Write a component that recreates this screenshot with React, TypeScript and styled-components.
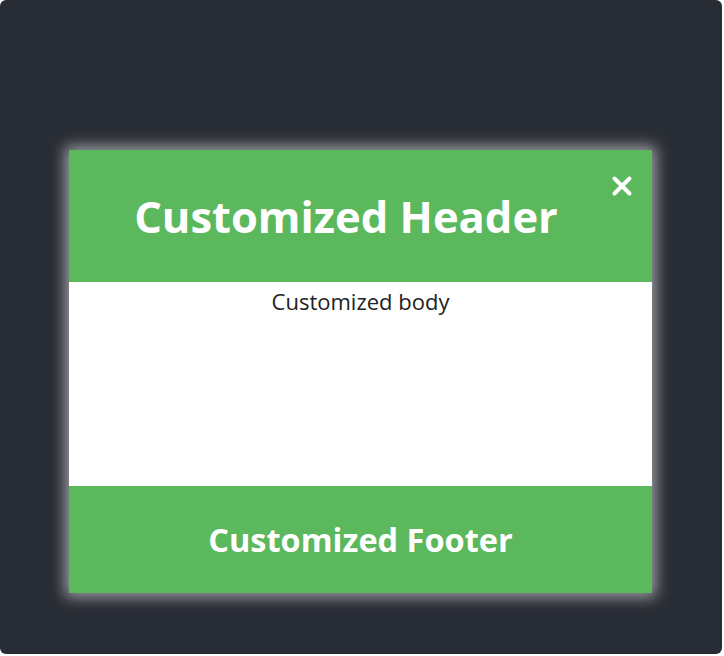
import React from "react";
import styled, { createGlobalStyle } from "styled-components";

const GlobalStyle = createGlobalStyle`
  html, body {
    margin: 0;
    padding: 0;
    background: #ffffff;
    font-family: "Open Sans", "Noto Sans", sans-serif;
  }
`;

const Stage = styled.div`
  width: 722px;
  height: 654px;
  background-color: #282c34;
  border-radius: 6px;
  display: flex;
  align-items: flex-start;
  justify-content: flex-start;
  padding: 150px 0 0 69px;
  box-sizing: border-box;
`;

const Modal = styled.div`
  width: 583px;
  display: flex;
  flex-direction: column;
  background: #ffffff;
  box-shadow: 0 0 14px 4px rgba(255, 255, 255, 0.55);
  position: relative;
`;

const Band = styled.div<{ $height: number; $size: number; $shift?: number }>`
  height: ${(p) => p.$height}px;
  background-color: #5cb85c;
  color: #ffffff;
  display: flex;
  align-items: center;
  justify-content: center;
  font-weight: 700;
  font-size: ${(p) => p.$size}px;
  padding-right: ${(p) => p.$shift ?? 0}px;
  box-sizing: border-box;
`;

const Body = styled.div`
  height: 204px;
  text-align: center;
  color: #222222;
  font-size: 22px;
  line-height: 38px;
`;

const Close = styled.button`
  position: absolute;
  top: 23px;
  right: 17px;
  background: none;
  border: none;
  padding: 0;
  color: #ffffff;
  cursor: pointer;
  display: flex;
`;

export default function App() {
  return (
    <>
      <GlobalStyle />
      <Stage>
        <Modal>
          <Close aria-label="close">
            <svg width="26" height="26" viewBox="0 0 26 26">
              <path d="M5.5 5.5 L20.5 20.5 M20.5 5.5 L5.5 20.5" stroke="#fff" strokeWidth="4" strokeLinecap="round" />
            </svg>
          </Close>
          <Band $height={132} $size={43.5} $shift={29}>
            Customized Header
          </Band>
          <Body>Customized body</Body>
          <Band $height={107} $size={32.5}>
            Customized Footer
          </Band>
        </Modal>
      </Stage>
    </>
  );
}
